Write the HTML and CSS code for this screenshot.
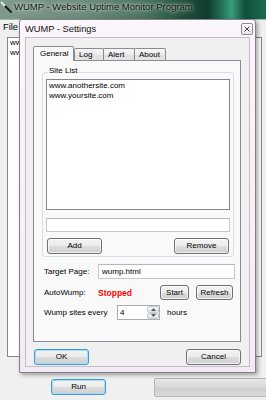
FILE: index.html
```html
<!DOCTYPE html>
<html>
<head>
    <title>WUMP - Website Uptime Monitor Program</title>
    <link rel="stylesheet" href="styles.css">
</head>
<body>
    <div class="main-window">
        <div class="main-title">
            <svg class="app-icon" width="12" height="12" viewBox="0 0 12 12">
                <line x1="1" y1="1" x2="5" y2="5" stroke="#e6e6e6" stroke-width="1.8"/>
                <line x1="5" y1="5" x2="11.5" y2="11.5" stroke="#111" stroke-width="1.8"/>
            </svg>
            <span>WUMP - Website Uptime Monitor Program</span>
        </div>
        <div class="menu-bar"><span>File</span></div>
        <div class="main-list">
            <div>www.anothersite.com</div>
            <div>www.yoursite.com</div>
        </div>
        <div class="main-footer">
            <button class="btn btn-default run-btn">Run</button>
            <div class="progress"></div>
        </div>
    </div>

    <!-- settings dialog over the main window -->
    <div class="dialog">
        <div class="dialog-title">
            <span>WUMP - Settings</span>
            <div class="close-btn">
                <svg width="6" height="6" viewBox="0 0 6 6">
                    <path d="M0.5 0.5 L5.5 5.5 M5.5 0.5 L0.5 5.5" stroke="#444" stroke-width="1"/>
                </svg>
            </div>
        </div>
        <div class="dialog-client">
            <div class="tabs">
                <div class="tab active tab-general">General</div>
                <div class="tab tab-log">Log</div>
                <div class="tab tab-alert">Alert</div>
                <div class="tab tab-about">About</div>
            </div>
            <div class="tab-page">
                <div class="group">
                    <div class="group-label">Site List</div>
                    <div class="site-list">
                        <div>www.anothersite.com</div>
                        <div>www.yoursite.com</div>
                    </div>
                    <div class="textbox site-input"></div>
                    <div class="group-buttons">
                        <button class="btn">Add</button>
                        <button class="btn">Remove</button>
                    </div>
                </div>

                <div class="form-row row-target">
                    <span class="label label-target">Target Page:</span>
                    <div class="textbox target-input">wump.html</div>
                </div>
                <div class="form-row row-auto">
                    <span class="label label-target">AutoWump:</span>
                    <span class="status">Stopped</span>
                    <button class="btn start-btn">Start</button>
                    <button class="btn refresh-btn">Refresh</button>
                </div>
                <div class="form-row row-every">
                    <span class="label label-every">Wump sites every</span>
                    <div class="spinner">
                        <span class="spinner-value">4</span>
                        <div class="spin-buttons">
                            <div class="spin-btn">
                                <svg width="5" height="3" viewBox="0 0 5 3"><path d="M0 3 L2.5 0 L5 3 Z" fill="#4a5a6a"/></svg>
                            </div>
                            <div class="spin-btn">
                                <svg width="5" height="3" viewBox="0 0 5 3"><path d="M0 0 L2.5 3 L5 0 Z" fill="#4a5a6a"/></svg>
                            </div>
                        </div>
                    </div>
                    <span class="hours">hours</span>
                </div>
            </div>
            <div class="dialog-buttons">
                <button class="btn btn-default ok-btn">OK</button>
                <button class="btn cancel-btn">Cancel</button>
            </div>
        </div>
    </div>
</body>
</html>
```

FILE: styles.css
```css
body {
    margin: 0;
    width: 266px;
    height: 400px;
    overflow: hidden;
    position: relative;
    background: #f0f0f0;
    font-family: "Liberation Sans", Arial, sans-serif;
    font-size: 8px;
    color: #000;
}

/* main window behind the dialog */
.main-window {
    height: 400px;
    display: flex;
    flex-direction: column;
}

.main-title {
    height: 20px;
    box-sizing: border-box;
    display: flex;
    align-items: flex-start;
    gap: 2px;
    padding: 1px 0 0 0;
    background: linear-gradient(90deg, #7f9a8a 0%, #6d8c7b 30%, #4b725f 55%, #1f4e3b 70%, #0f3d2c 78%, #22785c 84%, #3a9c7c 87%, #12513c 92%, #1b6a52 100%);
    border-bottom: 1px solid #9fb5a8;
    font-size: 9.5px;
    line-height: 12px;
    color: #141414;
    text-shadow: 0 0 3px rgba(235, 245, 238, 0.9), 0 0 6px rgba(235, 245, 238, 0.7);
}

.menu-bar {
    height: 17px;
    padding-left: 3px;
    font-size: 9.3px;
    line-height: 15px;
}

.main-list {
    margin-left: 7px;
    width: 255px;
    height: 320px;
    box-sizing: border-box;
    border: 1px solid #828790;
    background: #fff;
    padding: 0 2px;
    line-height: 10px;
}

.main-footer {
    display: flex;
    align-items: flex-start;
    padding: 21px 0 0 51px;
}

.run-btn {
    width: 55px;
    height: 16px;
    margin-top: 1px;
}

.progress {
    flex: 1;
    height: 17px;
    margin-left: 48px;
    margin-right: -4px;
    border: 1px solid #b4b4b4;
    border-radius: 2px;
    background: linear-gradient(#e8e8e8, #d6d6d6 50%, #cdcdcd 51%, #dadada);
}

/* dialog window */
.dialog {
    position: absolute;
    left: 19px;
    top: 19px;
    width: 237px;
    height: 354px;
    box-sizing: border-box;
    border: 1px solid #857e8a;
    border-radius: 3px 3px 0 0;
    background: linear-gradient(#fbf6fb, #f3ebf3);
    box-shadow: 2px 2px 4px rgba(0, 0, 0, 0.35);
    padding: 0 5px 5px 5px;
    display: flex;
    flex-direction: column;
}

.dialog-title {
    height: 17px;
    display: flex;
    align-items: center;
    font-size: 9.3px;
    color: #111;
}

.close-btn {
    margin-left: auto;
    margin-right: -3px;
    width: 12px;
    height: 12px;
    box-sizing: border-box;
    border: 1px solid #8d8894;
    border-radius: 2px;
    background: linear-gradient(#fdfbfd, #ece6ec);
    display: flex;
    align-items: center;
    justify-content: center;
}

.dialog-client {
    flex: 1;
    border: 1px solid #c6bac6;
    background: #f0f0f0;
    padding: 8px 8px 0 7px;
    display: flex;
    flex-direction: column;
}

.tabs {
    height: 14px;
    display: flex;
    align-items: flex-start;
}

.tab {
    height: 12px;
    margin-top: 2px;
    margin-left: -1px;
    box-sizing: border-box;
    border: 1px solid #898c95;
    border-bottom: none;
    border-radius: 2px 2px 0 0;
    background: linear-gradient(#f7f7f7, #ececec 50%, #dedede 51%, #e6e6e6);
    padding-left: 4px;
    line-height: 11px;
}

.tab.active {
    position: relative;
    z-index: 1;
    height: 15px;
    margin-top: 0;
    margin-left: 0;
    background: #f9f9f9;
    padding-left: 6px;
    line-height: 14px;
}

.tab.active + .tab {
    margin-left: 0;
}

.tab-general { width: 41px; }
.tab-log { width: 30px; }
.tab-alert { width: 32px; }
.tab-about { width: 32px; }

.tab-page {
    height: 282px;
    box-sizing: border-box;
    border: 1px solid #898c95;
    background: #f9f9f9;
    padding-top: 11px;
}

.group {
    margin-left: 8px;
    width: 192px;
    box-sizing: border-box;
    border: 1px solid #d5dfe5;
    border-radius: 3px;
    padding: 0 3px 2px 3px;
}

.group-label {
    width: fit-content;
    margin: -7px 0 0 2px;
    padding: 0 1px;
    background: #f9f9f9;
    line-height: 10px;
}

.site-list {
    margin-top: 3px;
    height: 131px;
    box-sizing: border-box;
    border: 1px solid #828790;
    background: #fff;
    padding: 1px 2px;
    line-height: 10px;
}

.textbox {
    box-sizing: border-box;
    border: 1px solid #c3c7ce;
    border-top-color: #b4b8bf;
    background: #fff;
    line-height: 13px;
    padding-left: 3px;
}

.site-input {
    margin-top: 8px;
    height: 14px;
}

.group-buttons {
    margin-top: 6px;
    display: flex;
    justify-content: space-between;
    padding: 0 1px;
}

.btn {
    height: 16px;
    width: 55px;
    box-sizing: border-box;
    border: 1px solid #707070;
    border-radius: 3px;
    background: linear-gradient(#f3f3f3, #ebebeb 50%, #dddddd 51%, #cfcfcf);
    box-shadow: inset 0 0 0 1px rgba(255, 255, 255, 0.7);
    font-family: inherit;
    font-size: 8px;
    color: #000;
    padding: 0;
    line-height: 14px;
}

.btn-default {
    border-color: #3c9ad8;
    box-shadow: inset 0 0 0 1px #a9dcf5;
}

.form-row {
    display: flex;
    align-items: center;
    padding-left: 10px;
}

.label-target {
    width: 54px;
}

.label-every {
    width: 73px;
}

.row-target {
    margin-top: 7px;
}

.target-input {
    width: 137px;
    height: 15px;
}

.row-auto {
    margin-top: 6px;
    padding-right: 7px;
}

.status {
    color: #ff0000;
    font-weight: bold;
    font-size: 8.5px;
}

.start-btn {
    width: 29px;
    height: 15px;
    margin-left: auto;
}

.refresh-btn {
    width: 37px;
    height: 15px;
    margin-left: 7px;
}

.row-every {
    margin-top: 5px;
}

.spinner {
    width: 43px;
    height: 15px;
    box-sizing: border-box;
    border: 1px solid #abadb3;
    background: #fff;
    display: flex;
    line-height: 13px;
}

.spinner-value {
    flex: 1;
    padding-left: 2px;
}

.spin-buttons {
    width: 12px;
    display: flex;
    flex-direction: column;
}

.spin-btn {
    flex: 1;
    box-sizing: border-box;
    border: 1px solid #c9ccd2;
    border-radius: 2px;
    background: linear-gradient(#f6f6f6, #e2e2e2);
    display: flex;
    align-items: center;
    justify-content: center;
}

.hours {
    margin-left: 7px;
}

.dialog-buttons {
    margin-top: 7px;
    display: flex;
    justify-content: space-between;
    padding-left: 1px;
}
```
